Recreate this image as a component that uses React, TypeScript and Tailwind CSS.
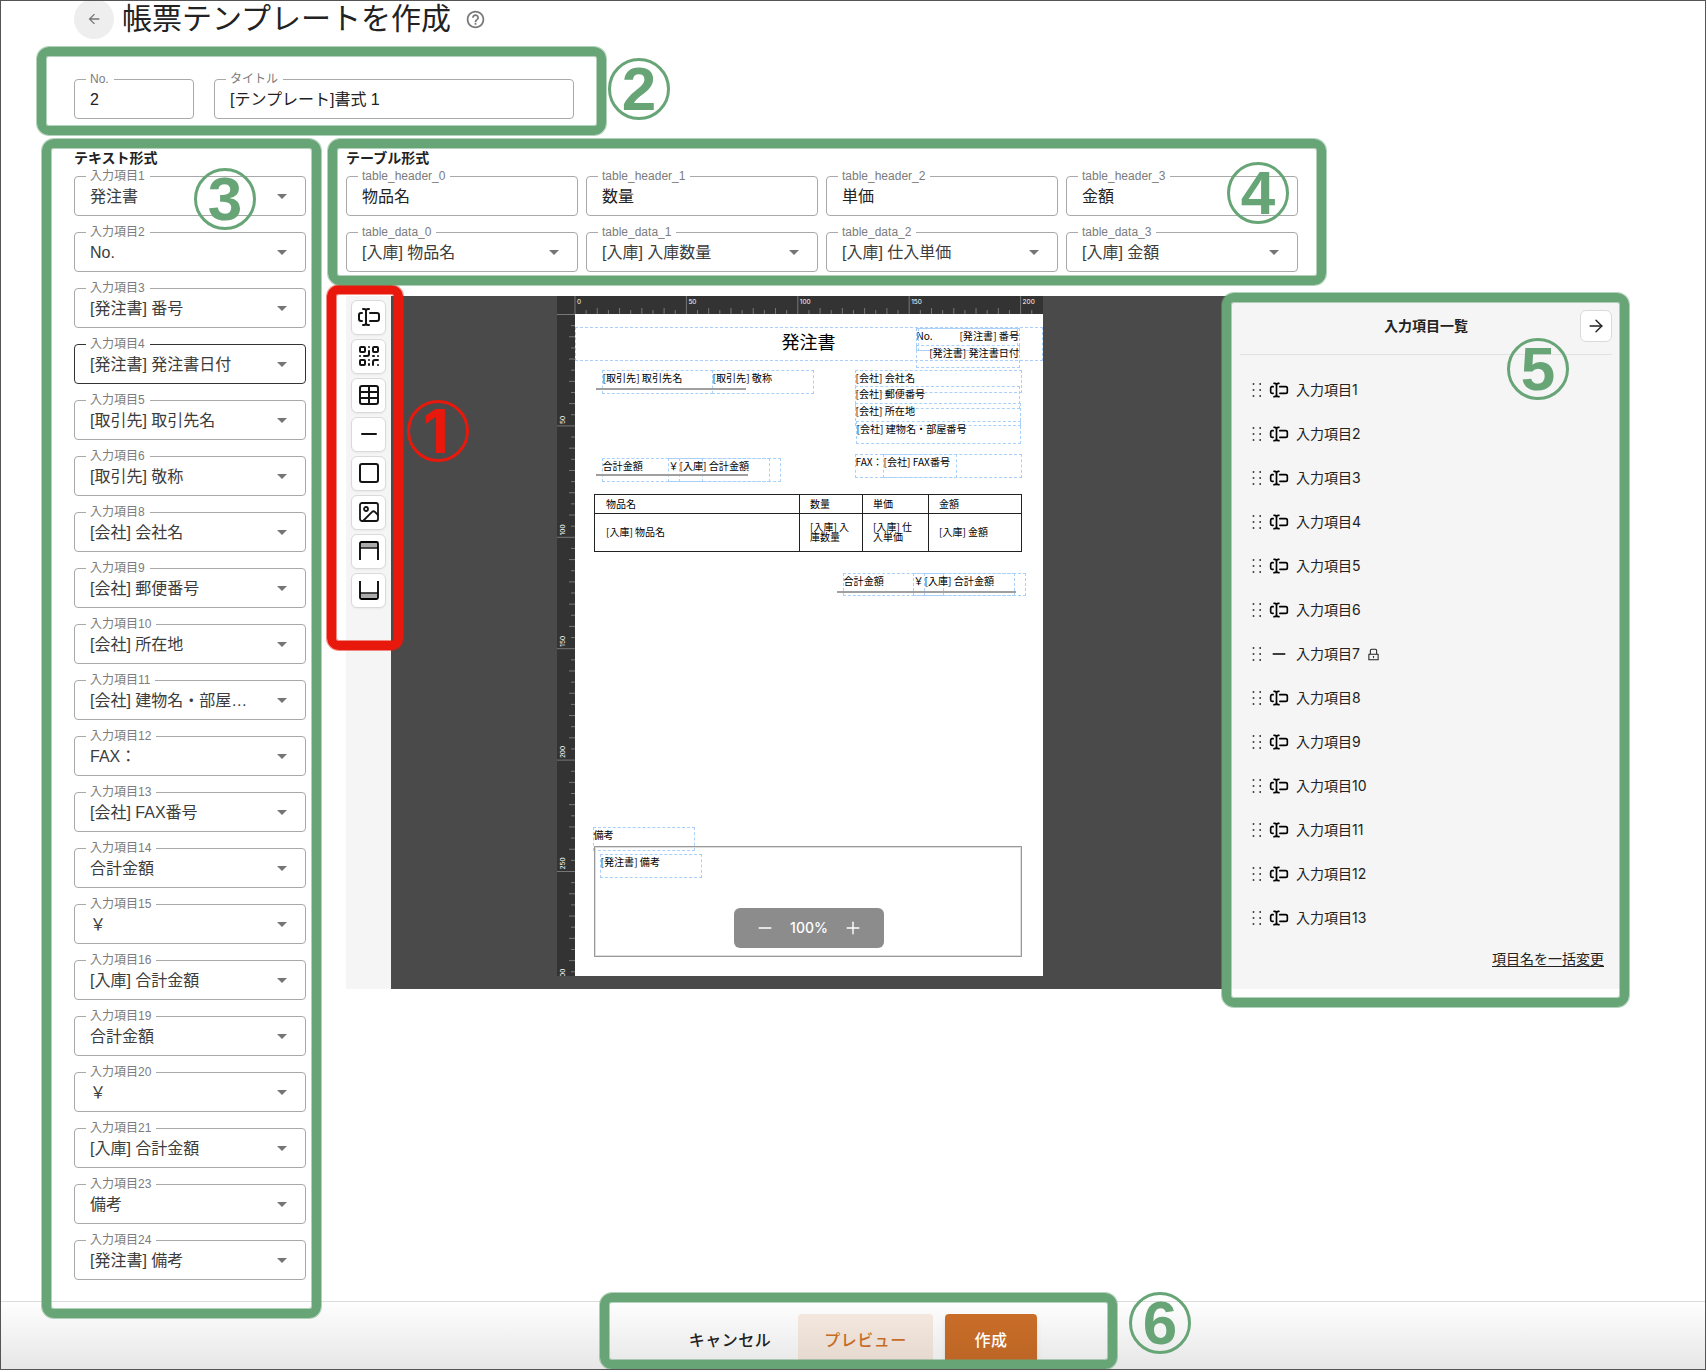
import {
  ArrowRight,
  Image,
  Minus,
  Plus,
  QrCode,
  Square,
  Table,
  TextCursorInput,
} from "lucide-react";
import { AiOutlineLock } from "react-icons/ai";
import { MdArrowBack, MdArrowDropDown, MdHelpOutline } from "react-icons/md";

interface FieldProps {
  label: string;
  value: string;
  select?: boolean;
  hovered?: boolean;
  className?: string;
}

interface PaperItem {
  text: string;
  x: number;
  y: number;
  w: number;
  h: number;
  align?: string;
}

const TEXT_FIELDS = [
  { no: 1, value: "発注書" },
  { no: 2, value: "No." },
  { no: 3, value: "[発注書] 番号" },
  { no: 4, value: "[発注書] 発注書日付" },
  { no: 5, value: "[取引先] 取引先名" },
  { no: 6, value: "[取引先] 敬称" },
  { no: 8, value: "[会社] 会社名" },
  { no: 9, value: "[会社] 郵便番号" },
  { no: 10, value: "[会社] 所在地" },
  { no: 11, value: "[会社] 建物名・部屋番号" },
  { no: 12, value: "FAX：" },
  { no: 13, value: "[会社] FAX番号" },
  { no: 14, value: "合計金額" },
  { no: 15, value: "￥" },
  { no: 16, value: "[入庫] 合計金額" },
  { no: 19, value: "合計金額" },
  { no: 20, value: "￥" },
  { no: 21, value: "[入庫] 合計金額" },
  { no: 23, value: "備考" },
  { no: 24, value: "[発注書] 備考" },
];

const TABLE_HEADERS = ["物品名", "数量", "単価", "金額"];
const TABLE_DATA = [
  "[入庫] 物品名",
  "[入庫] 入庫数量",
  "[入庫] 仕入単価",
  "[入庫] 金額",
];

const PAPER_ITEMS: PaperItem[] = [
  { text: "No.", x: 341, y: 14, w: 102, h: 23 },
  { text: "[発注書] 番号", x: 343, y: 14, w: 102, h: 23, align: "text-right" },
  { text: "[発注書] 発注書日付", x: 341, y: 31, w: 104, h: 23, align: "text-right" },
  { text: "[取引先] 取引先名", x: 27, y: 56, w: 111, h: 24 },
  { text: "[取引先] 敬称", x: 137, y: 56, w: 102, h: 24 },
  { text: "[会社] 会社名", x: 280, y: 56, w: 167, h: 23 },
  { text: "[会社] 郵便番号", x: 280, y: 72, w: 165, h: 23 },
  { text: "[会社] 所在地", x: 280, y: 89, w: 166, h: 23 },
  { text: "[会社] 建物名・部屋番号", x: 281, y: 107, w: 165, h: 23 },
  { text: "FAX：", x: 280, y: 140, w: 167, h: 24 },
  { text: "[会社] FAX番号", x: 308, y: 140, w: 74, h: 24 },
  { text: "合計金額", x: 27, y: 144, w: 101, h: 24 },
  { text: "￥", x: 93, y: 144, w: 102, h: 24 },
  { text: "[入庫] 合計金額", x: 104, y: 144, w: 102, h: 24 },
  { text: "合計金額", x: 268, y: 259, w: 101, h: 23 },
  { text: "￥", x: 338, y: 259, w: 102, h: 23 },
  { text: "[入庫] 合計金額", x: 349, y: 259, w: 102, h: 23 },
  { text: "備考", x: 18, y: 513, w: 102, h: 24 },
  { text: "[発注書] 備考", x: 25, y: 540, w: 102, h: 24 },
];

// pixels for 5mm on the ruler
const TICK = 11.14;

const HeaderIcon = () => (
  <svg width="24" height="24" viewBox="0 0 24 24" fill="none" stroke="black" strokeWidth="1.8">
    <rect x="3.5" y="3.5" width="17" height="5" fill="#aaa" stroke="none" />
    <path d="M3 21V4.5A1.5 1.5 0 0 1 4.500 3h15A1.500 1.500 0 0 1 21 4.500V21" />
    <path d="M3 9h18" strokeWidth="1.4" />
  </svg>
);

const FooterIcon = () => (
  <svg width="24" height="24" viewBox="0 0 24 24" fill="none" stroke="black" strokeWidth="1.8">
    <rect x="3.5" y="15.5" width="17" height="5" fill="#aaa" stroke="none" />
    <path d="M3 3v16.500A1.500 1.500 0 0 0 4.500 21h15a1.500 1.500 0 0 0 1.500-1.500V3" />
    <path d="M3 15h18" strokeWidth="1.4" />
  </svg>
);

const GripDots = () => (
  <svg width="10" height="14" viewBox="0 0 10 14" fill="#222">
    {[1, 7, 13].map((y) => (
      <g key={y}>
        <rect x="0.7" y={y - 0.8} width="1.6" height="1.6" />
        <rect x="7.4" y={y - 0.8} width="1.6" height="1.6" />
      </g>
    ))}
  </svg>
);

const Field = ({ label, value, select, hovered, className = "w-[232px]" }: FieldProps) => {
  return (
    <div
      className={`relative flex h-10 shrink-0 items-center rounded border pl-[15px] ${className} ${
        hovered ? "border-[#333]" : "border-[#a9a9a9]"
      }`}
    >
      <span className="absolute -top-px left-[11px] -translate-y-1/2 bg-white pr-[5px] pl-1 text-xs leading-4 whitespace-nowrap text-[#7c7c7c]">
        {label}
      </span>
      <span className={`truncate pt-0.5 text-base ${select ? "w-[160px] text-[#3c3c3c]" : "text-[#222]"}`}>
        {value}
      </span>
      {select && <MdArrowDropDown className="mr-[11px] ml-auto size-6 text-[#757575]" />}
    </div>
  );
};

const TopRuler = () => (
  <svg width="486" height="18" className="block bg-[#333]">
    {Array.from({ length: 42 }, (_, i) => {
      const x = 18 + i * TICK;
      const size = i % 10 === 0 ? 18 : i % 2 === 0 ? 6 : 4;
      return (
        <g key={i}>
          <path d={`M${x} ${18 - size}V18`} stroke="#777" />
          {i % 10 === 0 && (
            <text x={x + 2} y="8" fill="white" className="text-[6.5px]">
              {i * 5}
            </text>
          )}
        </g>
      );
    })}
  </svg>
);

const SideRuler = () => (
  <svg width="18" height="662" className="block shrink-0 bg-[#333]">
    {Array.from({ length: 61 }, (_, i) => {
      const y = i * TICK + 0.5;
      const size = i % 10 === 0 ? 18 : i % 2 === 0 ? 6 : 4;
      return (
        <g key={i}>
          <path d={`M${18 - size} ${y}H18`} stroke="#777" />
          {i > 0 && i % 10 === 0 && (
            <text transform={`translate(8 ${y - 2}) rotate(-90)`} fill="white" className="text-[6.5px]">
              {i * 5}
            </text>
          )}
        </g>
      );
    })}
  </svg>
);

const PaperTable = () => (
  <div className="absolute top-[180px] left-[19px] grid w-[428px] grid-cols-[205px_63px_66px_92px] grid-rows-[19px_37px] border border-[#222] text-[10px] leading-[10px]">
    {TABLE_HEADERS.map((text, i) => (
      <div
        key={text}
        className={`flex items-center border-b border-[#222] ${i === 0 ? "pl-[11px]" : "pl-[10px]"} ${i < 3 ? "border-r" : ""}`}
      >
        {text}
      </div>
    ))}
    {TABLE_DATA.map((text, i) => (
      <div
        key={text}
        className={`flex items-center border-[#222] pr-2 pb-0.5 ${i === 0 ? "pl-[11px]" : "pl-[10px]"} ${i < 3 ? "border-r" : ""}`}
      >
        <span className="break-all">{text}</span>
      </div>
    ))}
  </div>
);

const Paper = () => (
  <div className="relative h-[662px] w-[468px] bg-white font-['Noto_Sans_CJK_JP',sans-serif] text-black">
    <div className="absolute top-[13px] left-0 flex h-[34px] w-[468px] items-center justify-center border border-dashed border-[#a9d0fb] pr-px pb-[5px] text-[18px]">
      発注書
    </div>
    {PAPER_ITEMS.map((item, i) => (
      <div
        key={i}
        className={`absolute border border-dashed border-[#a9d0fb] text-[10.1px] leading-[13px] whitespace-nowrap ${item.align ?? ""}`}
        style={{ left: item.x, top: item.y, width: item.w, height: item.h }}
      >
        <span className={item.align ? "" : "-ml-[0.5px]"}>{item.text}</span>
      </div>
    ))}
    <div className="absolute top-[74px] left-[21px] h-[2px] w-[150px] bg-[#a0a0a0]" />
    <div className="absolute top-[160px] left-[21px] h-[2px] w-[152px] bg-[#a0a0a0]" />
    <div className="absolute top-[277px] left-[262px] h-[2px] w-[179px] bg-[#a0a0a0]" />
    <PaperTable />
    <div className="absolute top-[532px] left-[19px] h-[111px] w-[428px] border-[1.5px] border-[#999] shadow-[inset_0_0_0_1px_#ddd]" />
    <div className="absolute top-[594px] left-[159px] flex h-10 w-[150px] items-center justify-center rounded-md bg-[#8c8c8c] text-white">
      <Minus size={20} strokeWidth={1.7} />
      <span className="mr-[15px] ml-[15px] font-['Inter',sans-serif] text-sm font-medium">100%</span>
      <Plus size={20} strokeWidth={1.7} />
    </div>
  </div>
);

const Toolbar = () => {
  const icons = [
    <TextCursorInput key="text" />,
    <QrCode key="qr" />,
    <Table key="table" />,
    <Minus key="line" />,
    <Square key="rect" />,
    <Image key="image" strokeWidth={1.8} />,
    <HeaderIcon key="header" />,
    <FooterIcon key="footer" />,
  ];
  return (
    <div className="flex w-[45px] flex-col gap-1 bg-[#f5f5f5] pt-1 pl-[5px] text-[#141414]">
      {icons.map((icon) => (
        <button
          key={icon.key}
          className="flex size-[35px] items-center justify-center rounded-md border border-[#dadada] bg-white pb-px shadow-xs"
        >
          {icon}
        </button>
      ))}
    </div>
  );
};

const FieldList = () => (
  <div className="flex w-[400px] flex-col bg-[#f5f5f5] px-[14px] pt-[14px] font-['Inter','Noto_Sans_CJK_JP',sans-serif] text-sm text-[#222]">
    <div className="grid h-[45px] grid-cols-[1fr_auto_1fr] border-b border-[#e2e2e2]">
      <span />
      <span className="leading-8 font-bold">入力項目一覧</span>
      <button className="ml-auto flex size-8 items-center justify-center rounded-md border border-[#dadada] bg-white">
        <ArrowRight size={20} strokeWidth={1.7} />
      </button>
    </div>
    <div className="mt-[13px] flex flex-col">
      {Array.from({ length: 13 }, (_, i) => (
        <div key={i} className="flex h-11 items-center pl-3">
          <GripDots />
          <span className="mr-[7px] ml-[7px] text-black">
            {i === 6 ? <Minus size={20} strokeWidth={1.6} /> : <TextCursorInput size={20} />}
          </span>
          <span>入力項目{i + 1}</span>
          {i === 6 && <AiOutlineLock className="ml-[6px] size-[15px]" />}
        </div>
      ))}
    </div>
    <span className="mt-[9px] mr-2 self-end leading-5 underline underline-offset-2">項目名を一括変更</span>
  </div>
);

interface MarkerProps {
  no: number;
  frame: string;
  badge: string;
  color?: string;
  ring?: string;
  font?: string;
}

// numbered callout: a thick rounded frame and its circled number
const Marker = ({
  no,
  frame,
  badge,
  color = "border-[#67a577] text-[#67a577]",
  ring = "shadow-[0_0_0_1px_#67a57780,inset_0_0_0_1px_#67a57780]",
  font = "font-['Liberation_Sans',sans-serif] text-[62px]",
}: MarkerProps) => (
  <>
    <div className={`absolute rounded-[12px] border-[9px] ${frame} ${color} ${ring}`} />
    <div
      className={`absolute flex size-[62px] items-center justify-center rounded-full border-3 leading-none font-bold ${font} ${badge} ${color}`}
    >
      {no}
    </div>
  </>
);

const App = () => {
  return (
    <div className="relative h-[1370px] w-[1706px] overflow-hidden bg-white font-['Liberation_Sans','Noto_Sans_CJK_JP',sans-serif] text-[#222]">
      <header className="flex h-[38px] items-center pl-[74px]">
        <button className="flex size-10 shrink-0 items-center justify-center rounded-full bg-[#eee]">
          <MdArrowBack className="size-4 text-[#757575]" />
        </button>
        <h1 className="ml-[8px] text-[30px] leading-[38px]">帳票テンプレートを作成</h1>
        <MdHelpOutline className="ml-[14px] size-[21px] text-[#777]" />
      </header>

      <div className="mt-[41px] flex gap-5 pl-[74px]">
        <Field label="No." value="2" className="w-[120px]" />
        <Field label="タイトル" value="[テンプレート]書式 1" className="w-[360px]" />
      </div>

      <main className="mt-[29px] flex gap-10 pl-[74px]">
        <section className="w-[232px]">
          <h2 className="mb-2 text-sm leading-5 font-bold">テキスト形式</h2>
          <div className="flex flex-col gap-4">
            {TEXT_FIELDS.map((field) => (
              <Field
                key={field.no}
                label={`入力項目${field.no}`}
                value={field.value}
                select
                hovered={field.no === 4}
              />
            ))}
          </div>
        </section>

        <section>
          <h2 className="mb-2 text-sm leading-5 font-bold">テーブル形式</h2>
          <div className="grid grid-cols-[repeat(4,232px)] gap-x-2 gap-y-4">
            {TABLE_HEADERS.map((value, i) => (
              <Field key={value} label={`table_header_${i}`} value={value} />
            ))}
            {TABLE_DATA.map((value, i) => (
              <Field key={value} label={`table_data_${i}`} value={value} select />
            ))}
          </div>

          <div className="mt-6 flex h-[693px]">
            <Toolbar />
            <div className="w-[835px] bg-[#4a4a4a] pl-[166px] font-['Inter',sans-serif]">
              <TopRuler />
              <div className="flex">
                <SideRuler />
                <Paper />
              </div>
            </div>
            <FieldList />
          </div>
        </section>
      </main>

      <footer className="absolute inset-x-0 bottom-0 flex h-[69px] justify-center border-t border-[#dcdcdc] bg-linear-to-b from-[#fefefe] to-[#e6e6e6] pt-3 text-base font-medium tracking-[0.5px]">
        <div className="ml-[5px] flex h-[52px] gap-3">
          <button className="w-[112px] pt-0.5">キャンセル</button>
          <button className="w-[135px] rounded bg-[#c76c27]/13 pt-0.5 text-[#c76c27]">プレビュー</button>
          <button className="w-[92px] rounded bg-linear-to-b from-[#c96e29] to-[#bb6424] pt-0.5 text-white shadow-md">
            作成
          </button>
        </div>
      </footer>

      <Marker
        no={1}
        frame="top-[285px] left-[327px] h-[365px] w-[76px]"
        badge="top-[400px] left-[407px] pr-1"
        color="border-[#e8190c] text-[#e8190c]"
        ring="shadow-[0_0_0_1px_#e8190c80,inset_0_0_0_1px_#e8190c80]"
        font="font-['Inter',sans-serif] text-[60px]"
      />
      <Marker no={2} frame="top-[47px] left-[37px] h-[88px] w-[569px]" badge="top-[58px] left-[608px]" />
      <Marker no={3} frame="top-[139px] left-[42px] h-[1179px] w-[279px]" badge="top-[168px] left-[194px]" />
      <Marker no={4} frame="top-[139px] left-[328px] h-[146px] w-[998px]" badge="top-[162px] left-[1227px]" />
      <Marker no={5} frame="top-[293px] left-[1222px] h-[714px] w-[407px]" badge="top-[338px] left-[1507px]" />
      <Marker no={6} frame="top-[1293px] left-[600px] h-[76px] w-[517px]" badge="top-[1292px] left-[1129px]" />

      <div className="pointer-events-none absolute inset-0 border border-[#555]" />
    </div>
  );
};

export default App;
